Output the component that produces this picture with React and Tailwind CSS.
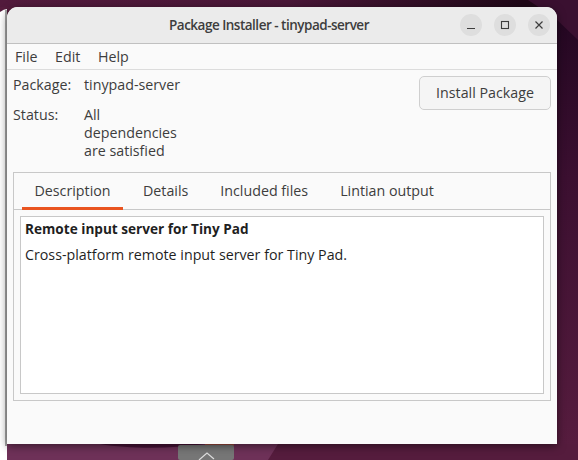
import React from "react";

function Wallpaper() {
  return (
    <svg className="absolute inset-0" width="578" height="460" viewBox="0 0 578 460">
      <defs>
        <linearGradient id="topBand" x1="0" y1="0" x2="1" y2="0">
          <stop offset="0" stopColor="#521a3c" />
          <stop offset="0.5" stopColor="#4a1738" />
          <stop offset="0.9" stopColor="#200818" />
          <stop offset="1" stopColor="#200818" />
        </linearGradient>
        <linearGradient id="rightStrip" x1="0" y1="0" x2="0" y2="1">
          <stop offset="0" stopColor="#210620" />
          <stop offset="0.4" stopColor="#3b0f30" />
          <stop offset="1" stopColor="#561c3e" />
        </linearGradient>
      </defs>
      <rect width="578" height="460" fill="#551c3d" />
      <rect width="578" height="7" fill="url(#topBand)" />
      <rect x="557" width="21" height="444" fill="url(#rightStrip)" />
      <path d="M528 0H578V40L555 18Z" fill="#3a1030" />
      <path d="M0 444H278L268 460H0Z" fill="#6e3158" />
      <path d="M100 444C130 449 170 449 205 444Z" fill="#471236" />
      <rect x="205" y="444" width="29" height="2" fill="#9c4a3c" />
      <rect x="178" y="445" width="56" height="15" fill="#767676" rx="2" />
      <path d="M199 460L207 453L214 459" stroke="#dddddd" strokeWidth="1.2" fill="none" />
      <path d="M0 12Q4 9 7 9V460H0Z" fill="#ffffff" />
      <rect x="5" y="10" width="2" height="436" fill="#a8a8a8" />
    </svg>
  );
}

function WinBtn({ children }) {
  return (
    <div className="flex h-[22px] w-[22px] items-center justify-center rounded-full bg-[#dedede]">
      {children}
    </div>
  );
}

export default function App() {
  return (
    <div className="relative h-[460px] w-[578px] overflow-hidden font-['Open_Sans','Noto_Sans',sans-serif] text-[14.25px] text-[#3d3d3d]">
      <Wallpaper />
      <div className="relative ml-[7px] mt-[7px] flex h-[437px] w-[550px] flex-col overflow-hidden rounded-t-[11px] bg-[#fafafa] shadow-[0_2px_8px_rgba(0,0,0,0.5)]">
        <div className="flex h-[37px] shrink-0 items-center border-b border-[#c0c0c0] bg-[#ebebeb]">
          <div className="flex-1 pl-[71px] text-center text-[13.5px] font-semibold tracking-[-0.5px] text-[#3d3d3d]">
            Package Installer - tinypad-server
          </div>
          <div className="flex gap-[12px] pr-[7px]">
            <WinBtn>
              <svg width="10" height="10" viewBox="0 0 10 10"><path d="M1 8.5H9" stroke="#3d3d3d" strokeWidth="1.1" /></svg>
            </WinBtn>
            <WinBtn>
              <svg width="10" height="10" viewBox="0 0 10 10"><rect x="1.5" y="1.5" width="7" height="7" fill="none" stroke="#3d3d3d" strokeWidth="1.1" /></svg>
            </WinBtn>
            <WinBtn>
              <svg width="10" height="10" viewBox="0 0 10 10"><path d="M1.5 1.5L8.5 8.5M8.5 1.5L1.5 8.5" stroke="#3d3d3d" strokeWidth="1.2" /></svg>
            </WinBtn>
          </div>
        </div>
        <div className="flex h-[26px] shrink-0 items-center border-b border-[#dcdcdc] pl-[8px]">
          <span className="w-[40px]">File</span>
          <span className="w-[43px]">Edit</span>
          <span>Help</span>
        </div>
        <div className="flex justify-between px-[6px]">
          <div className="grid grid-cols-[71px_100px] pt-[6px] leading-[18px]">
            <span>Package:</span>
            <span>tinypad-server</span>
            <span className="mt-[12px]">Status:</span>
            <span className="mt-[12px]">All dependencies are satisfied</span>
          </div>
          <button className="mt-[6px] h-[34px] w-[132px] rounded-[5px] border border-[#cfcfcf] bg-[#f5f5f5]">
            Install Package
          </button>
        </div>
        <div className="mx-[6px] mt-[12px] flex h-[229px] flex-col border border-[#c8c8c8]">
          <div className="flex h-[37px] shrink-0 border-b border-[#c8c8c8]">
            <div className="-mb-px ml-[8px] flex w-[101px] items-center justify-center border-b-[3px] border-[#e95420] pt-[1px]">Description</div>
            <div className="ml-[20px] flex items-center">Details</div>
            <div className="ml-[32px] flex items-center">Included files</div>
            <div className="ml-[32px] flex items-center">Lintian output</div>
          </div>
          <div className="m-[6px] flex-1 border border-[#c8c8c8] bg-white px-[4px] pt-[2px] text-[#1f1f1f]">
            <div className="text-[13.6px] font-bold leading-[20px]">Remote input server for Tiny Pad</div>
            <div className="mt-[6px] leading-[20px]">Cross-platform remote input server for Tiny Pad.</div>
          </div>
        </div>
      </div>
    </div>
  );
}
